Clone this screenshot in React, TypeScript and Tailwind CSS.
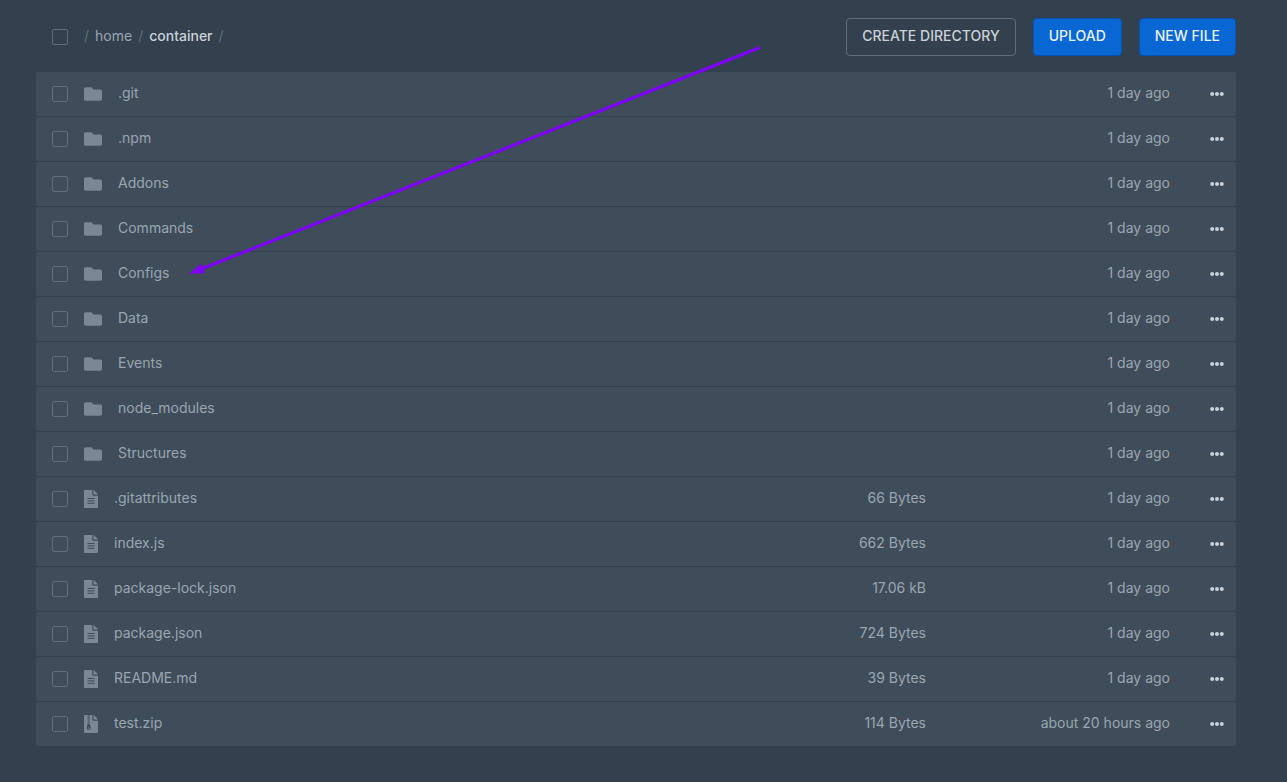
import React from 'react';
import { FaEllipsisH, FaFolder } from 'react-icons/fa';

type Kind = 'folder' | 'file' | 'archive';

interface Entry {
  name: string;
  kind: Kind;
  size?: string;
  modified: string;
}

const entries: Entry[] = [
  { name: '.git', kind: 'folder', modified: '1 day ago' },
  { name: '.npm', kind: 'folder', modified: '1 day ago' },
  { name: 'Addons', kind: 'folder', modified: '1 day ago' },
  { name: 'Commands', kind: 'folder', modified: '1 day ago' },
  { name: 'Configs', kind: 'folder', modified: '1 day ago' },
  { name: 'Data', kind: 'folder', modified: '1 day ago' },
  { name: 'Events', kind: 'folder', modified: '1 day ago' },
  { name: 'node_modules', kind: 'folder', modified: '1 day ago' },
  { name: 'Structures', kind: 'folder', modified: '1 day ago' },
  { name: '.gitattributes', kind: 'file', size: '66 Bytes', modified: '1 day ago' },
  { name: 'index.js', kind: 'file', size: '662 Bytes', modified: '1 day ago' },
  { name: 'package-lock.json', kind: 'file', size: '17.06 kB', modified: '1 day ago' },
  { name: 'package.json', kind: 'file', size: '724 Bytes', modified: '1 day ago' },
  { name: 'README.md', kind: 'file', size: '39 Bytes', modified: '1 day ago' },
  { name: 'test.zip', kind: 'archive', size: '114 Bytes', modified: 'about 20 hours ago' },
];

function Checkbox({ label }: { label: string }) {
  return (
    <input
      type="checkbox"
      aria-label={label}
      className="block size-4 shrink-0 appearance-none rounded-xs border border-[#606d7b] checked:bg-[#0967d3]"
    />
  );
}

// Sheet with a folded corner; the children are drawn over it in the row's background colour.
function Sheet({ children }: { children: React.ReactNode }) {
  return (
    <svg className="block h-[18px] w-[14px] shrink-0" viewBox="0 0 14 18" fill="none" aria-hidden="true">
      <path
        d="M.8 0H8.3V4.8Q8.3 5.7 9.2 5.7H14V17.2Q14 18 13.2 18H.8Q0 18 0 17.2V.8Q0 0 .8 0Z"
        fill="currentColor"
      />
      <path d="M9.5 0H9.8L14 4.2V4.6H9.5Z" fill="currentColor" />
      {children}
    </svg>
  );
}

function KindIcon({ kind }: { kind: Kind }) {
  if (kind === 'folder') return <FaFolder className="block h-[18px] w-[18px] shrink-0" />;
  if (kind === 'archive') {
    return (
      <Sheet>
        <path d="M5.3 0V1.1M4.1 1.1V2.3M5.3 2.3V3.4M4.1 3.4V4.5M5.3 4.5V5.7M4.1 5.7V6.8M5.3 6.8V7.9M4.1 7.9V9" stroke="#3f4d5a" strokeWidth="1.3" />
        <path d="M4 9H5.6L6.7 12.6Q7 14.9 4.7 15Q2.4 14.9 2.8 12.6L3.6 9Z" fill="#3f4d5a" />
        <ellipse cx="4.7" cy="13.2" rx="1" ry=".6" fill="currentColor" />
      </Sheet>
    );
  }
  return (
    <Sheet>
      <path d="M3.5 8.5H10.5M3.5 10.9H10.5M3.5 13.3H10.5" stroke="#3f4d5a" strokeWidth="1" />
    </Sheet>
  );
}

function Row({ entry }: { entry: Entry }) {
  return (
    <tr className="h-11 text-[#9aa5b1]">
      <td className="w-12 rounded-l-xs bg-[#3f4d5a] pl-4">
        <Checkbox label={`Select ${entry.name}`} />
      </td>
      <td className="bg-[#3f4d5a]">
        <a href={`#${entry.name}`} className="flex items-center gap-4">
          <span className="text-[#7b8793]">
            <KindIcon kind={entry.kind} />
          </span>
          <span className="pb-0.5">{entry.name}</span>
        </a>
      </td>
      <td className="w-40 bg-[#3f4d5a] pb-0.5 text-right">{entry.size}</td>
      <td className="w-[244px] bg-[#3f4d5a] pb-0.5 text-right">{entry.modified}</td>
      <td className="w-[66px] rounded-r-xs bg-[#3f4d5a]">
        <button type="button" aria-label={`Actions for ${entry.name}`} className="ml-auto mr-3 block text-[#cad1d8]">
          <FaEllipsisH className="block size-[14px]" />
        </button>
      </td>
    </tr>
  );
}

function Arrow() {
  return (
    <svg
      className="pointer-events-none absolute left-[189px] top-[46px]"
      width="573"
      height="230"
      viewBox="-1 0 573 230"
      fill="none"
      aria-hidden="true"
    >
      <path d="M570 1.5L10 223.5" stroke="#7f00ff" strokeWidth="3" />
      <path d="M-1 227.7L11.2 217.5L14.8 227.2Z" fill="#7f00ff" />
    </svg>
  );
}

export default function App() {
  return (
    <main className="relative min-h-screen bg-[#33404d] pb-9 pl-9 pr-[51px] pt-[18px] font-['Inter','Noto_Sans',sans-serif] text-sm">
      <header className="mb-[15px] flex items-center">
        <div className="pl-4">
          <Checkbox label="Select all files" />
        </div>
        <nav aria-label="Path" className="ml-4 flex gap-1.5 pb-0.5 text-[#606d7b]">
          <span>/</span>
          <a href="#home" className="text-[#9aa5b1]">home</a>
          <span>/</span>
          <a href="#container" className="font-medium text-[#cad1d8]">container</a>
          <span>/</span>
        </nav>
        <div className="ml-auto flex gap-[17px] font-medium">
          <button type="button" className="h-[38px] rounded-sm border border-[#606d7b] px-[15px] pb-0.5 text-[#cad1d8]">
            CREATE DIRECTORY
          </button>
          <button type="button" className="h-[38px] rounded-sm border border-[#0552b5] bg-[#0967d3] px-[15px] pb-0.5 text-[#e8f2fd]">
            UPLOAD
          </button>
          <button type="button" className="h-[38px] rounded-sm border border-[#0552b5] bg-[#0967d3] px-[15px] pb-0.5 text-[#e8f2fd]">
            NEW FILE
          </button>
        </div>
      </header>

      <table aria-label="Files" className="w-full border-separate border-spacing-x-0 border-spacing-y-px">
        <tbody>
          {entries.map((entry) => (
            <Row key={entry.name} entry={entry} />
          ))}
        </tbody>
      </table>

      <Arrow />
    </main>
  );
}
